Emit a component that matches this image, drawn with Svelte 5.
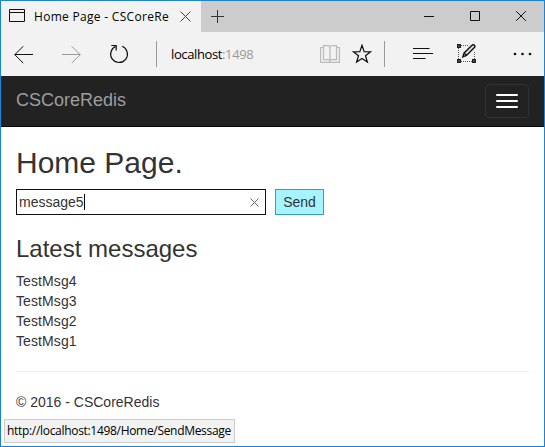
<script>
  const messages = ['TestMsg4', 'TestMsg3', 'TestMsg2', 'TestMsg1'];
</script>

<div class="window">
  <header class="tabs">
    <div class="tab">
      <svg class="page" width="16" height="13" viewBox="0 0 16 13"><path d="M.5 .5h15v12H.5zM.5 3.5h15" /></svg>
      <span class="title">Home Page - CSCoreRe</span>
      <svg class="close" width="11" height="11" viewBox="0 0 11 11"><path d="M.5 .5l10 10M10.500 .5l-10 10" /></svg>
    </div>
    <svg class="plus" width="13" height="13" viewBox="0 0 13 13"><path d="M6.500 0v13M0 6.500h13" /></svg>
    <div class="controls">
      <svg width="10" height="10" viewBox="0 0 10 10"><path d="M0 5.500h10" /></svg>
      <svg width="10" height="10" viewBox="0 0 10 10"><path d="M.5 .5h9v9h-9z" /></svg>
      <svg width="10" height="10" viewBox="0 0 10 10"><path d="M.2 .2l9.600 9.600M9.800 .2l-9.600 9.600" /></svg>
    </div>
  </header>

  <div class="toolbar">
    <svg class="back" width="19" height="18" viewBox="0 0 19 18"><path d="M19 8.500H.8M9.200 .3L.8 8.700l8.400 8.400" /></svg>
    <svg class="forward" width="19" height="18" viewBox="0 0 19 18"><path d="M0 8.500h18.200M9.800 .3l8.400 8.400-8.400 8.400" /></svg>
    <svg class="reload" width="20" height="20" viewBox="0 0 20 20"><path d="M13.200 2.300A8.400 8.400 0 1 1 6.400 2.500M2.300 1.500h4.900v5" /></svg>
    <div class="address"><span class="url">localhost<i>:1498</i></span></div>
    <svg class="book" width="20" height="18" viewBox="0 0 20 18"><path d="M3.500 2.500H.6v14.800h18.800V2.500h-2.900M10 2.500v14.800M3.500 .7H8q2 0 2 2 0-2 2-2h4.500v14H12q-2 0-2 1.500 0-1.500-2-1.500H3.500z" /></svg>
    <svg class="star" width="20" height="20" viewBox="0 0 20 20"><path d="M10 1.300l2.150 6.300 6.500 .2-5.150 4 1.850 6.300L10 14.400l-5.350 3.700 1.850-6.300-5.150-4 6.500-.2z" /></svg>
    <div class="tools">
      <svg class="hub" width="20" height="12" viewBox="0 0 20 12"><path d="M0 .5h16.500M0 5.500h20M0 10.500h12.500" /></svg>
      <svg class="note" width="19" height="19" viewBox="0 0 19 19">
        <path class="dash" d="M4 1.500h8M1.500 4v11M4 17.500h11M17.500 8v7" />
        <path class="dot" d="M0 0h4v4H0zM0 15h4v4H0zM15 15h4v4h-4z" />
        <path class="hole" d="M1.500 1.500h1v1h-1zM1.500 16.500h1v1h-1zM16.500 16.500h1v1h-1z" />
        <path class="pen" d="M5.800 12.900l1.300-4L15 1.200q1.200-1 2.400 0 1 1.200 0 2.400L9.500 11.500zM7.100 8.900l2.400 2.600" />
      </svg>
      <svg class="more" width="19" height="4" viewBox="0 0 19 4"><circle cx="2" cy="2" r="1.350" /><circle cx="9.500" cy="2" r="1.350" /><circle cx="17" cy="2" r="1.350" /></svg>
    </div>
  </div>

  <nav>
    <span class="brand">CSCoreRedis</span>
    <button class="toggle" aria-label="Toggle navigation"><b></b><b></b><b></b></button>
  </nav>

  <main>
    <h2>Home Page.</h2>
    <div class="form">
      <div class="field">
        <span>message5</span><em></em>
        <svg width="9" height="9" viewBox="0 0 9 9"><path d="M.5 .5l8 8M8.500 .5l-8 8" /></svg>
      </div>
      <button class="send">Send</button>
    </div>
    <h3>Latest messages</h3>
    {#each messages as message}
      <div class="message">{message}</div>
    {/each}
    <hr />
    <footer>© 2016 - CSCoreRedis</footer>
  </main>

  <div class="status"><span>http://localhost:1498/Home/SendMessage</span></div>
</div>

<style>
  :global(body) { margin: 0; }
  .window {
    box-sizing: border-box; position: relative; width: 545px; height: 447px;
    overflow: hidden; border: 1px solid #1883d7; background: #fff; color: #333;
    font: 14px/20px "Liberation Sans", Arial, sans-serif;
  }
  svg { display: block; flex: none; fill: none; stroke: #111; stroke-width: 1; }
  .tabs { display: flex; height: 31px; background: #ccc; }
  .tab { display: flex; width: 200px; height: 31px; background: #f2f2f2; box-sizing: border-box; padding-left: 8px; }
  .page { margin-top: 8px; }
  .title {
    flex: none; width: 137px; margin-left: 9px; color: #000; white-space: nowrap; overflow: hidden;
    font: 12px/31px "Open Sans", "Noto Sans", sans-serif; letter-spacing: .3px;
  }
  .close { margin: 10px 0 0 9px; stroke: #444; }
  .plus { margin: 9px 0 0 10px; stroke: #333; }
  .controls { display: flex; gap: 36px; margin: 10px 18px 0 auto; }
  .toolbar { display: flex; height: 44px; background: #f2f2f2; }
  .back { margin: 14px 0 0 13px; }
  .forward { margin: 14px 0 0 29px; stroke: #999; }
  .reload { margin: 12px 0 0 28px; stroke-width: 1.2; }
  .address { width: 164px; height: 26px; margin: 9px 0 0 27px; border-left: 1px solid #999; }
  .url { display: block; margin-left: 14px; color: #000; font: 13px/26px "Open Sans", "Noto Sans", sans-serif; letter-spacing: -.38px; }
  .url i { color: #999; font-style: normal; }
  .book { margin: 13px 0 0 -1px; stroke: #bbb; stroke-width: 1.2; }
  .star { margin: 12px 0 0 12px; stroke-width: 1.25; }
  .tools { display: flex; height: 26px; margin: 9px 0 0 12px; border-left: 1px solid #999; }
  .hub { margin: 7px 0 0 28px; }
  .note { margin: 3px 0 0 24px; }
  .dash { stroke: #555; stroke-dasharray: 1 1; }
  .dot { fill: #222; stroke: none; }
  .hole { fill: #aaa; stroke: none; }
  .pen { fill: #ddd; stroke-width: 1.4; }
  .more { margin: 11px 0 0 37px; fill: #111; stroke: none; }
  nav { display: flex; justify-content: space-between; height: 50px; background: #222; border-bottom: 1px solid #080808; }
  .brand { margin-left: 15px; color: #9d9d9d; font-size: 18px; line-height: 49px; }
  .toggle {
    box-sizing: border-box; display: flex; flex-direction: column; gap: 4px; width: 44px; height: 34px;
    margin: 8px 15px 0 0; padding: 9px 10px; border: 1px solid #333; border-radius: 4px; background: none;
  }
  .toggle b { width: 22px; height: 2px; border-radius: 1px; background: #fff; }
  main { padding: 0 15px; }
  h2, h3 { margin: 0; font-weight: normal; }
  h2 { padding-top: 19px; font-size: 30px; line-height: 33px; }
  .form { display: flex; gap: 9px; margin-top: 10px; }
  .field { box-sizing: border-box; display: flex; align-items: center; width: 250px; height: 26px; padding: 0 6px 0 2px; border: 1px solid #111; }
  .field em { width: 1px; height: 16px; background: #000; }
  .field svg { margin-left: auto; stroke: #666; }
  .send { box-sizing: border-box; width: 49px; height: 26px; padding: 0; border: 1px solid #2a9fd8; background: #a6f4ff; color: #333; font: inherit; }
  h3 { margin: 21px 0 9px; font-size: 24px; line-height: 26px; }
  .message { height: 20px; letter-spacing: .1px; }
  hr { height: 1px; margin: 20px 0; border: 0; background: #eee; }
  .status {
    position: absolute; left: 3px; top: 418px; box-sizing: border-box; width: 231px; height: 24px;
    padding-left: 2px; border: 1px solid #ccc; background: #f2f2f2; color: #000; white-space: nowrap;
    font: 12px/22px "Open Sans", "Noto Sans", sans-serif; letter-spacing: -.31px;
  }
</style>
